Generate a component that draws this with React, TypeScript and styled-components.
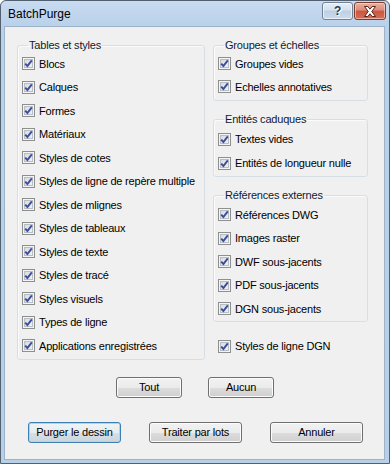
import styled, { createGlobalStyle } from 'styled-components';

const GlobalStyle = createGlobalStyle`
  html, body {
    margin: 0;
    padding: 0;
    background: #ffffff;
  }
  body {
    font-family: "Liberation Sans", Arial, sans-serif;
    font-size: 11px;
    letter-spacing: -0.2px;
    color: #000;
  }
`;

const Window = styled.div`
  box-sizing: border-box;
  width: 390px;
  height: 464px;
  display: flex;
  flex-direction: column;
  border: 1px solid #52606f;
  border-radius: 6px 6px 0 0;
  background: linear-gradient(#c8dcf1, #bad1ea 24px, #b8cfe8);
  overflow: hidden;
`;

const TitleBar = styled.div`
  height: 25px;
  flex: none;
  display: flex;
  align-items: flex-start;
  padding: 0 3px 0 7px;
`;

const Title = styled.div`
  margin-top: 7px;
  font-size: 12px;
  line-height: 13px;
  letter-spacing: 0;
`;

const Caption = styled.div`
  margin-left: auto;
  margin-top: 1px;
  display: flex;
  gap: 1px;
`;

const CaptionButton = styled.div<{ $close?: boolean }>`
  box-sizing: border-box;
  width: ${p => (p.$close ? 32 : 31)}px;
  height: 18px;
  display: flex;
  align-items: center;
  justify-content: center;
  border: 1px solid ${p => (p.$close ? '#7d3c30' : '#6e8196')};
  border-radius: 3px;
  background: ${p =>
    p.$close
      ? 'linear-gradient(#eab1a3, #dc8a77 45%, #c9553f 50%, #d56c55)'
      : 'linear-gradient(#e6eef7, #d3e0ee 45%, #bccfe3 50%, #cddcec)'};
  box-shadow: inset 0 0 0 1px ${p => (p.$close ? 'rgba(255,220,210,0.6)' : 'rgba(255,255,255,0.6)')};
`;

const HelpGlyph = styled.span`
  font: bold 12px "Liberation Sans", Arial, sans-serif;
  color: #2a3a50;
  text-shadow: 1px 1px 0 #ffffff;
  line-height: 12px;
`;

const Client = styled.div`
  flex: 1;
  margin: 0 4px 3px 3px;
  border: 1px solid #9db3ca;
  background: #f0f0f0;
  padding: 12px 17px 0 12px;
  display: flex;
  flex-direction: column;
`;

const Columns = styled.div`
  display: grid;
  grid-template-columns: 188px 155px;
  column-gap: 8px;
  align-items: start;
`;

const Stack = styled.div`
  display: flex;
  flex-direction: column;
`;

const Group = styled.fieldset<{ $row: number; $pt?: number; $pb?: number; $mt?: number }>`
  box-sizing: border-box;
  margin: ${p => p.$mt ?? 0}px 0 0 0;
  min-width: 0;
  padding: ${p => p.$pt ?? 0}px 4px ${p => p.$pb ?? 0}px 4px;
  border: 1px solid #d5dfe5;
  border-radius: 3px;
  box-shadow: inset 1px 1px 0 #fbfbfb;

  & > label {
    height: ${p => p.$row}px;
  }
`;

const Legend = styled.legend`
  padding: 0 1px;
  margin-left: 6px;
  line-height: 13px;
  color: #0f1a33;
`;

const Row = styled.label<{ $indent?: number; $h?: number; $mt?: number }>`
  display: flex;
  align-items: center;
  gap: 4px;
  padding-left: ${p => p.$indent ?? 0}px;
  margin-top: ${p => p.$mt ?? 0}px;
  ${p => (p.$h ? `height: ${p.$h}px;` : '')}
  white-space: nowrap;
`;

const Box = styled.span`
  box-sizing: border-box;
  flex: none;
  width: 13px;
  height: 13px;
  border: 1px solid #8e8f8f;
  background: linear-gradient(135deg, #d3d6da, #f6f6f6);
  box-shadow: inset 0 0 0 1px #f4f4f4, inset 0 0 0 2px #b9bec4;
  display: flex;
  align-items: center;
  justify-content: center;
`;

const ButtonRow = styled.div<{ $mt: number; $spread?: boolean }>`
  margin-top: ${p => p.$mt}px;
  display: flex;
  justify-content: ${p => (p.$spread ? 'space-between' : 'center')};
  gap: 26px;
  padding: ${p => (p.$spread ? '0 4px 0 11px' : '0 0 0 6px')};
`;

const Button = styled.button<{ $w: number; $default?: boolean }>`
  box-sizing: border-box;
  width: ${p => p.$w}px;
  height: 21px;
  padding: 0;
  font: 11px "Liberation Sans", Arial, sans-serif;
  letter-spacing: -0.2px;
  color: #000;
  border: 1px solid ${p => (p.$default ? '#3c7fb1' : '#707070')};
  border-radius: 3px;
  background: ${p =>
    p.$default
      ? 'linear-gradient(#f0f4f7, #e6ecf0 50%, #d8e0e6 50%, #ccd5dc)'
      : 'linear-gradient(#f2f2f2, #ebebeb 50%, #dddddd 50%, #cfcfcf)'};
  box-shadow: inset 0 0 0 1px ${p => (p.$default ? '#9cdcf7' : '#fbfbfb')};
`;

const Check = ({ label, indent, h, mt }: { label: string; indent?: number; h?: number; mt?: number }) => (
  <Row $indent={indent} $h={h} $mt={mt}>
    <Box>
      <svg width="9" height="9" viewBox="0 0 9 9">
        <path d="M1.2 4.6 L3.4 7 L7.8 1.4" fill="none" stroke="#3b4f9e" strokeWidth="2" />
      </svg>
    </Box>
    <span>{label}</span>
  </Row>
);

const tables = [
  'Blocs',
  'Calques',
  'Formes',
  'Matériaux',
  'Styles de cotes',
  'Styles de ligne de repère multiple',
  'Styles de mlignes',
  'Styles de tableaux',
  'Styles de texte',
  'Styles de tracé',
  'Styles visuels',
  'Types de ligne',
  'Applications enregistrées',
];

const refs = ['Références DWG', 'Images raster', 'DWF sous-jacents', 'PDF sous-jacents', 'DGN sous-jacents'];

export default function App() {
  return (
    <>
      <GlobalStyle />
      <Window>
        <TitleBar>
          <Title>BatchPurge</Title>
          <Caption>
            <CaptionButton>
              <HelpGlyph>?</HelpGlyph>
            </CaptionButton>
            <CaptionButton $close>
              <svg width="14" height="11" viewBox="0 0 14 11">
                <path
                  d="M1.5 0.5 H4.8 L7 3.2 L9.2 0.5 H12.5 L8.8 5.5 L12.5 10.5 H9.2 L7 7.8 L4.8 10.5 H1.5 L5.2 5.5 Z"
                  fill="#ffffff"
                  stroke="#5a2318"
                  strokeWidth="1"
                  strokeLinejoin="round"
                />
              </svg>
            </CaptionButton>
          </Caption>
        </TitleBar>
        <Client>
          <Columns>
            <Group $row={23.5} $pb={1}>
              <Legend>Tables et styles</Legend>
              {tables.map(t => (
                <Check key={t} label={t} />
              ))}
            </Group>
            <Stack>
              <Group $row={23} $pb={2}>
                <Legend>Groupes et échelles</Legend>
                <Check label="Groupes vides" />
                <Check label="Echelles annotatives" />
              </Group>
              <Group $row={24} $pt={1} $pb={1} $mt={12}>
                <Legend>Entités caduques</Legend>
                <Check label="Textes vides" />
                <Check label="Entités de longueur nulle" />
              </Group>
              <Group $row={23.5} $pt={1} $mt={12}>
                <Legend>Références externes</Legend>
                {refs.map(r => (
                  <Check key={r} label={r} />
                ))}
              </Group>
              <Check label="Styles de ligne DGN" indent={5} h={23.5} mt={13} />
            </Stack>
          </Columns>
          <ButtonRow $mt={17}>
            <Button $w={66}>Tout</Button>
            <Button $w={66}>Aucun</Button>
          </ButtonRow>
          <ButtonRow $mt={24} $spread>
            <Button $w={93} $default>
              Purger le dessin
            </Button>
            <Button $w={93}>Traiter par lots</Button>
            <Button $w={93}>Annuler</Button>
          </ButtonRow>
        </Client>
      </Window>
    </>
  );
}
